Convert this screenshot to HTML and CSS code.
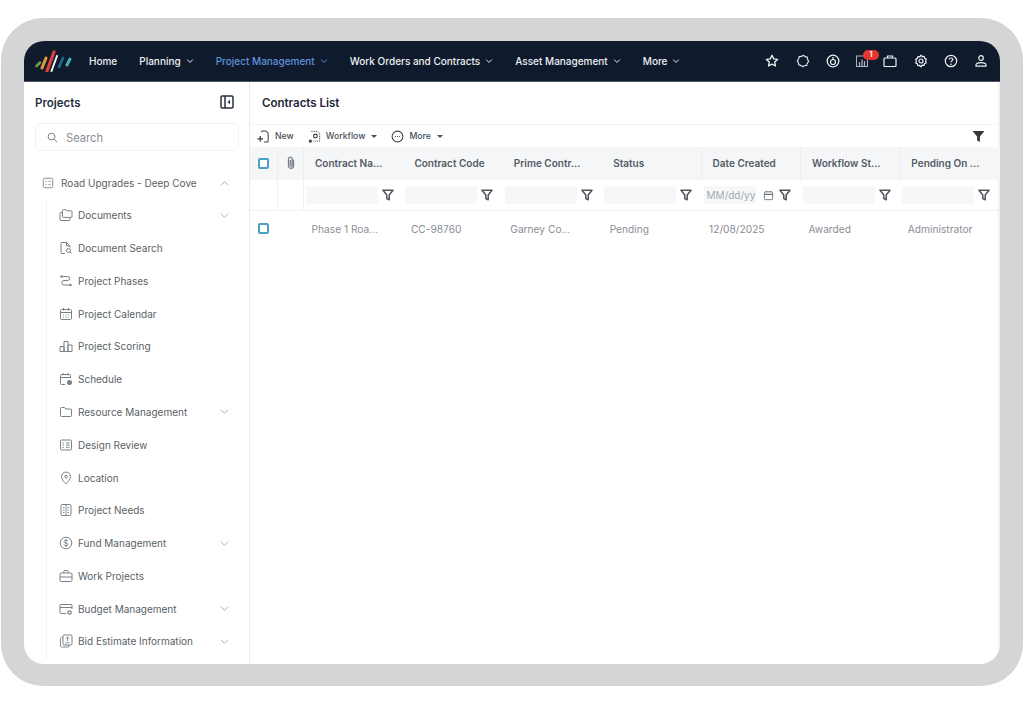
FILE: index.html
```html
<!DOCTYPE html>
<html lang="en">
<head>
    <meta charset="UTF-8">
    <meta name="viewport" content="width=device-width, initial-scale=1.0">
    <title>Contracts List</title>
    <link rel="stylesheet" href="styles.css">
</head>
<body>
    <!-- Icons -->
    <svg class="sprite" xmlns="http://www.w3.org/2000/svg">
        <symbol id="i-chev" viewBox="0 0 10 10"><path d="M1.500 3.200 5 6.800l3.500-3.600" fill="none" stroke="currentColor" stroke-width="1.200"/></symbol>
        <symbol id="i-up" viewBox="0 0 10 10"><path d="M1 7 5 3l4 4" fill="none" stroke="currentColor"/></symbol>
        <symbol id="i-down" viewBox="0 0 10 10"><path d="M1 3l4 4 4-4" fill="none" stroke="currentColor"/></symbol>
        <symbol id="i-filter" viewBox="0 0 12 12"><path d="M1 1.200h10L7.200 6v4.800L4.800 9.600V6z" fill="none" stroke="currentColor" stroke-width="1.500" stroke-linejoin="round"/></symbol>
        <symbol id="i-list" viewBox="0 0 14 14"><rect x="1.500" y="1.500" width="11" height="11" rx="1.500" fill="none" stroke="currentColor"/><path d="M4 5h1.500M7.500 5H10M4 9h1.500M7.500 9H10" stroke="currentColor"/></symbol>
        <symbol id="i-folder" viewBox="0 0 14 14"><path d="M1.500 3.500a1 1 0 0 1 1-1h3l1.300 1.500h4.700a1 1 0 0 1 1 1v5.500a1 1 0 0 1-1 1h-9a1 1 0 0 1-1-1z" fill="none" stroke="currentColor"/></symbol>
        <symbol id="i-folders" viewBox="0 0 14 14"><path d="M3.500 3v-.5a.8.8 0 0 1 .8-.8h2.500l1 1.100h4.400a.8.8 0 0 1 .8.8v5a.8.8 0 0 1-.8.8H4.300a.8.8 0 0 1-.8-.8z" fill="none" stroke="currentColor"/><path d="M3.500 4.500h-1.500a1 1 0 0 0-1 1v6a1 1 0 0 0 1 1h8a1 1 0 0 0 1-1v-1.500" fill="none" stroke="currentColor"/></symbol>
        <symbol id="i-docsearch" viewBox="0 0 14 14"><path d="M6 12.500H3a1 1 0 0 1-1-1v-9a1 1 0 0 1 1-1h4.500L11 5v1.500M7.500 1.500V5H11" fill="none" stroke="currentColor"/><circle cx="9.500" cy="9.500" r="2" fill="none" stroke="currentColor"/><path d="m11 11 1.500 1.500" stroke="currentColor"/></symbol>
        <symbol id="i-route" viewBox="0 0 14 14"><circle cx="2.500" cy="2.500" r="1.200" fill="currentColor"/><circle cx="11.500" cy="11" r="1.200" fill="currentColor"/><path d="M3.500 2.500h5.200a2 2 0 0 1 0 4H5a2.200 2.200 0 0 0 0 4.500h5.500" fill="none" stroke="currentColor"/></symbol>
        <symbol id="i-cal" viewBox="0 0 14 14"><rect x="1.500" y="2.500" width="11" height="10" rx="1.200" fill="none" stroke="currentColor"/><path d="M1.500 5.500h11M4.500 1v2.500M9.500 1v2.500" stroke="currentColor"/><path d="M4 8h1M6.500 8h1M9 8h1M4 10.300h1M6.500 10.300h1M9 10.300h1" stroke="currentColor" stroke-width=".8"/></symbol>
        <symbol id="i-bars" viewBox="0 0 14 14"><path d="M1 12.500V7.500h4v5zM5 12.500V2.500h4v10zM9 12.500V6h4v6.500z" fill="none" stroke="currentColor" stroke-linejoin="round"/></symbol>
        <symbol id="i-sched" viewBox="0 0 14 14"><path d="M6 12.500H2.500a1 1 0 0 1-1-1v-8a1 1 0 0 1 1-1h8a1 1 0 0 1 1 1V6M1.500 5.500h10M4 1v2.500M9 1v2.500" fill="none" stroke="currentColor"/><circle cx="10.500" cy="10.500" r="2.500" fill="currentColor"/></symbol>
        <symbol id="i-review" viewBox="0 0 14 14"><rect x="1.500" y="2" width="11" height="10" rx="1.200" fill="none" stroke="currentColor"/><path d="M3.500 5h1.500M7 5h3.500M3.500 7h1.500M7 7h3.500M3.500 9.300h1.500M7 9.300h3.500" stroke="currentColor" stroke-width=".9"/></symbol>
        <symbol id="i-pin" viewBox="0 0 14 14"><path d="M7 13S2.500 8.800 2.500 5.600a4.500 4.500 0 0 1 9 0C11.500 8.800 7 13 7 13z" fill="none" stroke="currentColor"/><circle cx="7" cy="5.600" r="1.300" fill="none" stroke="currentColor"/></symbol>
        <symbol id="i-needs" viewBox="0 0 14 14"><rect x="2" y="1.500" width="10" height="11" rx="1.200" fill="none" stroke="currentColor"/><path d="M7 1.500v11M4 4.500h1.500M4 7h1.500M4 9.500h1.500M8.500 4.500H10M8.500 7H10M8.500 9.500H10" stroke="currentColor" stroke-width=".9"/></symbol>
        <symbol id="i-fund" viewBox="0 0 14 14"><circle cx="7" cy="7" r="5.800" fill="none" stroke="currentColor"/><path d="M9 5.200C8.700 4.400 7.900 4 7 4c-1.200 0-2 .6-2 1.500C5 7.600 9.100 6.400 9.100 8.500 9.100 9.400 8.200 10 7 10c-1 0-1.800-.4-2.100-1.300M7 3v8" fill="none" stroke="currentColor" stroke-width=".9"/></symbol>
        <symbol id="i-case" viewBox="0 0 14 14"><rect x="1" y="4" width="12" height="8.500" rx="1.300" fill="none" stroke="currentColor"/><path d="M4.800 4V2.500a1 1 0 0 1 1-1h2.400a1 1 0 0 1 1 1V4M1 8h12" fill="none" stroke="currentColor"/></symbol>
        <symbol id="i-budget" viewBox="0 0 14 14"><path d="M7 11.500H2a1 1 0 0 1-1-1v-7a1 1 0 0 1 1-1h10a1 1 0 0 1 1 1V7M1 5.500h12" fill="none" stroke="currentColor"/><circle cx="10.500" cy="10.500" r="1.700" fill="none" stroke="currentColor" stroke-width="1.200"/></symbol>
        <symbol id="i-bid" viewBox="0 0 14 14"><rect x="4" y="1" width="9" height="10" rx="1.200" fill="none" stroke="currentColor"/><path d="M4 3.500H2.500a1 1 0 0 0-1 1V12a1 1 0 0 0 1 1H9a1 1 0 0 0 1-1v-1M8.500 3v4M7 4.500 8.500 3 10 4.500M6.500 8.800h4" fill="none" stroke="currentColor" stroke-width=".9"/></symbol>
        <symbol id="i-cal-sm" viewBox="0 0 12 12"><rect x="1.500" y="2" width="9" height="8.500" rx="1" fill="none" stroke="currentColor"/><path d="M1.500 4.800h9" stroke="currentColor" stroke-width="1.300"/><path d="M3.800 1v1.500M8.200 1v1.500" stroke="currentColor"/></symbol>
    </svg>

    <div class="frame">
        <div class="window">
            <!-- Верхнее меню -->
            <header class="topbar">
                <svg class="logo" viewBox="0 0 38 22">
                    <path d="M1.500 16 5 12.500" stroke="#6f9c4a" stroke-width="2.600" stroke-linecap="round"/>
                    <path d="M7 18 11 8" stroke="#e09a35" stroke-width="3" stroke-linecap="round"/>
                    <path d="M12 21 19 2" stroke="#d8433c" stroke-width="3.200" stroke-linecap="round"/>
                    <path d="M16.500 21 22 6" stroke="#eef0f2" stroke-width="2" stroke-linecap="round"/>
                    <path d="M24 17 28 8" stroke="#1f6f8b" stroke-width="2.600" stroke-linecap="round"/>
                    <path d="M32 15 35 9" stroke="#3fb4b8" stroke-width="3" stroke-linecap="round"/>
                </svg>
                <nav class="nav">
                    <a class="nav-item">Home</a>
                    <a class="nav-item">Planning <svg class="chev"><use href="#i-chev"/></svg></a>
                    <a class="nav-item active">Project Management <svg class="chev"><use href="#i-chev"/></svg></a>
                    <a class="nav-item">Work Orders and Contracts <svg class="chev"><use href="#i-chev"/></svg></a>
                    <a class="nav-item">Asset Management <svg class="chev"><use href="#i-chev"/></svg></a>
                    <a class="nav-item">More <svg class="chev"><use href="#i-chev"/></svg></a>
                </nav>
                <div class="top-icons">
                    <svg class="top-icon star" viewBox="0 0 14 14"><path d="m7 1.300 1.700 3.600 3.900.5-2.900 2.700.8 3.900L7 10.100l-3.500 1.900.8-3.900L1.400 5.400l3.900-.5z" fill="none" stroke="currentColor" stroke-width="1.300" stroke-linejoin="round"/></svg>
                    <svg class="top-icon" viewBox="0 0 14 14"><path d="M12.800 7 10.940 10.080M11.100 11.100 7.610 11.960M7 12.800 3.920 10.940M2.900 11.100 2.040 7.610M1.200 7 3.060 3.920M2.900 2.900 6.390 2.040M7 1.200 10.080 3.060M11.100 2.900 11.960 6.390" fill="none" stroke="currentColor" stroke-width="1.100" stroke-linecap="round"/></svg>
                    <svg class="top-icon" viewBox="0 0 14 14"><circle cx="7" cy="7" r="5.800" fill="none" stroke="currentColor" stroke-width="1.300"/><circle cx="7" cy="8" r="2.500" fill="none" stroke="currentColor" stroke-width="1.200"/><path d="M7 3v3" stroke="currentColor" stroke-width="1.200"/></svg>
                    <span class="report">
                        <svg class="top-icon" viewBox="0 0 14 14"><rect x="1.500" y="2" width="11" height="10.500" fill="none" stroke="currentColor"/><path d="M4.500 12V8M7 12V5.500M9.500 12V7" stroke="currentColor" stroke-width="1.300"/></svg>
                        <span class="badge">1</span>
                    </span>
                    <svg class="top-icon case" viewBox="0 0 14 14"><rect x="1" y="4" width="12" height="8.500" rx="1" fill="none" stroke="currentColor" stroke-width="1.200"/><path d="M4.500 4V2h5v2" fill="none" stroke="currentColor" stroke-width="1.200"/></svg>
                    <svg class="top-icon" viewBox="0 0 14 14"><path d="M7 1.200 8.200 2.600l1.900-.2.500 1.800 1.700.9-.7 1.800.7 1.800-1.700.9-.5 1.800-1.900-.2L7 12.800l-1.200-1.400-1.900.2-.5-1.800-1.700-.9.700-1.800-.7-1.800 1.700-.9.500-1.800 1.900.2z" fill="none" stroke="currentColor" stroke-width="1.200" stroke-linejoin="round"/><circle cx="7" cy="7" r="2" fill="none" stroke="currentColor" stroke-width="1.200"/></svg>
                    <svg class="top-icon" viewBox="0 0 14 14"><circle cx="7" cy="7" r="5.700" fill="none" stroke="currentColor" stroke-width="1.200"/><path d="M5.200 5.500C5.300 4.500 6 4 7 4s1.800.6 1.800 1.500C8.800 6.800 7 6.800 7 8.300" fill="none" stroke="currentColor" stroke-width="1.200"/><circle cx="7" cy="10.200" r=".8" fill="currentColor"/></svg>
                    <svg class="top-icon" viewBox="0 0 14 14"><circle cx="7" cy="4" r="2.300" fill="none" stroke="currentColor" stroke-width="1.200"/><path d="M2 12.200V11c0-1.500 1.500-2.300 5-2.300s5 .8 5 2.300v1.200z" fill="none" stroke="currentColor" stroke-width="1.200" stroke-linejoin="round"/></svg>
                </div>
            </header>

            <div class="body">
                <!-- Боковая панель -->
                <aside class="sidebar">
                    <div class="side-head">
                        <h2 class="side-title">Projects</h2>
                        <svg class="collapse" viewBox="0 0 14 14"><rect x="1" y="1" width="12" height="12" rx="1.200" fill="none" stroke="currentColor" stroke-width="1.500"/><path d="M5 1v12" stroke="currentColor" stroke-width="1.500"/><path d="M10 4.800v4.400L7.500 7z" fill="currentColor"/></svg>
                    </div>
                    <div class="search">
                        <svg class="search-icon" viewBox="0 0 12 12"><circle cx="5" cy="5" r="3.700" fill="none" stroke="currentColor"/><path d="m8 8 3 3" stroke="currentColor"/></svg>
                        <span>Search</span>
                    </div>
                    <div class="project">
                        <svg class="project-icon"><use href="#i-list"/></svg>
                        <span class="item-text">Road Upgrades - Deep Cove</span>
                        <svg class="arrow"><use href="#i-up"/></svg>
                    </div>
                    <ul class="tree">
                        <li class="tree-item"><svg class="item-icon"><use href="#i-folders"/></svg><span class="item-text">Documents</span><svg class="arrow"><use href="#i-down"/></svg></li>
                        <li class="tree-item"><svg class="item-icon"><use href="#i-docsearch"/></svg><span class="item-text">Document Search</span></li>
                        <li class="tree-item"><svg class="item-icon"><use href="#i-route"/></svg><span class="item-text">Project Phases</span></li>
                        <li class="tree-item"><svg class="item-icon"><use href="#i-cal"/></svg><span class="item-text">Project Calendar</span></li>
                        <li class="tree-item"><svg class="item-icon"><use href="#i-bars"/></svg><span class="item-text">Project Scoring</span></li>
                        <li class="tree-item"><svg class="item-icon"><use href="#i-sched"/></svg><span class="item-text">Schedule</span></li>
                        <li class="tree-item"><svg class="item-icon"><use href="#i-folder"/></svg><span class="item-text">Resource Management</span><svg class="arrow"><use href="#i-down"/></svg></li>
                        <li class="tree-item"><svg class="item-icon"><use href="#i-review"/></svg><span class="item-text">Design Review</span></li>
                        <li class="tree-item"><svg class="item-icon"><use href="#i-pin"/></svg><span class="item-text">Location</span></li>
                        <li class="tree-item"><svg class="item-icon"><use href="#i-needs"/></svg><span class="item-text">Project Needs</span></li>
                        <li class="tree-item"><svg class="item-icon"><use href="#i-fund"/></svg><span class="item-text">Fund Management</span><svg class="arrow"><use href="#i-down"/></svg></li>
                        <li class="tree-item"><svg class="item-icon"><use href="#i-case"/></svg><span class="item-text">Work Projects</span></li>
                        <li class="tree-item"><svg class="item-icon"><use href="#i-budget"/></svg><span class="item-text">Budget Management</span><svg class="arrow"><use href="#i-down"/></svg></li>
                        <li class="tree-item"><svg class="item-icon"><use href="#i-bid"/></svg><span class="item-text">Bid Estimate Information</span><svg class="arrow"><use href="#i-down"/></svg></li>
                    </ul>
                </aside>

                <!-- Основная часть -->
                <main class="main">
                    <h1 class="page-title">Contracts List</h1>
                    <div class="toolbar">
                        <span class="tool">
                            <svg class="tool-icon" viewBox="0 0 14 14"><path d="M5 2.500V2a1 1 0 0 1 1-1h3.500L12 3.500V12a1 1 0 0 1-1 1H7.500" fill="none" stroke="currentColor" stroke-width="1.100"/><path d="M3.500 6.500v6M.5 9.500h6" stroke="currentColor" stroke-width="1.400"/></svg>
                            New
                        </span>
                        <span class="tool">
                            <svg class="tool-icon" viewBox="0 0 14 14"><path d="M3.500 1.500h7l2 2v8.500h-7" fill="none" stroke="currentColor" stroke-width=".9" stroke-dasharray="1.500 1"/><circle cx="8" cy="6.500" r="2" fill="none" stroke="currentColor" stroke-width="1.300"/><rect x="1" y="10.500" width="3" height="3" fill="currentColor"/></svg>
                            Workflow <span class="caret"></span>
                        </span>
                        <span class="tool">
                            <svg class="tool-icon" viewBox="0 0 14 14"><circle cx="7" cy="7" r="5.800" fill="none" stroke="currentColor" stroke-width="1.100"/><path d="M4.200 7h1M6.500 7h1M8.800 7h1" stroke="currentColor" stroke-width="1.200"/></svg>
                            More <span class="caret"></span>
                        </span>
                        <svg class="clear-filter" viewBox="0 0 12 12"><path d="M.5 1h11L7.300 6v5L4.700 9.700V6z" fill="currentColor"/></svg>
                    </div>

                    <div class="grid">
                        <div class="head-cell small"><span class="check"></span></div>
                        <div class="head-cell small clip-cell"><svg class="clip" viewBox="0 0 10 14"><path d="M7.500 3.500v6.300a2.500 2.500 0 0 1-5 0V3a1.800 1.800 0 0 1 3.600 0v6.300a.9.900 0 0 1-1.800 0V4" fill="none" stroke="currentColor" stroke-width="1.300"/></svg></div>
                        <div class="head-cell">Contract Na...</div>
                        <div class="head-cell">Contract Code</div>
                        <div class="head-cell">Prime Contr...</div>
                        <div class="head-cell">Status</div>
                        <div class="head-cell">Date Created</div>
                        <div class="head-cell">Workflow St...</div>
                        <div class="head-cell">Pending On ...</div>

                        <div class="filter-cell empty"></div>
                        <div class="filter-cell empty"></div>
                        <div class="filter-cell"><span class="filter-input"></span><svg class="filter-icon"><use href="#i-filter"/></svg></div>
                        <div class="filter-cell"><span class="filter-input"></span><svg class="filter-icon"><use href="#i-filter"/></svg></div>
                        <div class="filter-cell"><span class="filter-input"></span><svg class="filter-icon"><use href="#i-filter"/></svg></div>
                        <div class="filter-cell"><span class="filter-input"></span><svg class="filter-icon"><use href="#i-filter"/></svg></div>
                        <div class="filter-cell"><span class="filter-input date">MM/dd/yy</span><svg class="cal-icon"><use href="#i-cal-sm"/></svg><svg class="filter-icon"><use href="#i-filter"/></svg></div>
                        <div class="filter-cell"><span class="filter-input"></span><svg class="filter-icon"><use href="#i-filter"/></svg></div>
                        <div class="filter-cell"><span class="filter-input"></span><svg class="filter-icon"><use href="#i-filter"/></svg></div>

                        <div class="data-cell small"><span class="check"></span></div>
                        <div class="data-cell small"></div>
                        <div class="data-cell">Phase 1 Roa...</div>
                        <div class="data-cell">CC-98760</div>
                        <div class="data-cell">Garney Co...</div>
                        <div class="data-cell">Pending</div>
                        <div class="data-cell">12/08/2025</div>
                        <div class="data-cell">Awarded</div>
                        <div class="data-cell">Administrator</div>
                    </div>
                </main>
            </div>
        </div>
    </div>
</body>
</html>
```

FILE: styles.css
```css
/* Общие стили */
* {
    box-sizing: border-box;
}

body {
    margin: 0;
    height: 705px;
    background-color: #ffffff;
    font-family: 'Inter', 'Liberation Sans', sans-serif;
    overflow: hidden;
}

.sprite {
    display: none;
}

.frame {
    width: 1022px;
    height: 668px;
    margin: 18px 0 0 1px;
    padding: 23px 23px 22px;
    background-color: #d5d5d5;
    border-radius: 42px;
}

.window {
    height: 100%;
    display: flex;
    flex-direction: column;
    background-color: #ffffff;
    border-radius: 20px;
    overflow: hidden;
}

/* Верхнее меню */
.topbar {
    height: 41px;
    flex: none;
    display: flex;
    align-items: center;
    background-color: #0f1a2c;
    border-bottom: 1px solid #4a5564;
    color: #eef0f3;
}

.logo {
    width: 38px;
    height: 22px;
    margin-left: 11px;
    flex: none;
}

.nav {
    display: flex;
    align-items: center;
    margin-left: 16px;
    gap: 22px;
}

.nav-item {
    display: flex;
    align-items: center;
    gap: 5px;
    font-size: 10px;
    font-weight: 500;
    white-space: nowrap;
}

.nav-item.active {
    color: #5f93dc;
}

.chev {
    width: 8px;
    height: 8px;
}

.top-icons {
    display: flex;
    align-items: center;
    gap: 16px;
    margin-left: auto;
    margin-right: 12px;
}

.top-icon {
    display: block;
    width: 14px;
    height: 14px;
}

.top-icon.star {
    margin-right: 1px;
}

.top-icon.case {
    margin-right: 1px;
}

.report {
    position: relative;
    display: block;
    margin-left: -1px;
    margin-right: -2px;
}

.report .top-icon {
    color: #aab1bb;
}

.badge {
    position: absolute;
    top: -4px;
    left: 8px;
    width: 16px;
    height: 10px;
    border-radius: 5px;
    background-color: #e5352f;
    color: #ffffff;
    font-size: 7px;
    font-weight: 700;
    line-height: 10px;
    text-align: center;
}

.body {
    flex: 1;
    min-height: 0;
    display: flex;
}

/* Боковая панель */
.sidebar {
    width: 226px;
    flex: none;
    padding: 0 11px;
    border-right: 1px solid #e9ebee;
    overflow: hidden;
}

.side-head {
    display: flex;
    align-items: center;
    justify-content: space-between;
    height: 41px;
    padding-top: 1px;
    padding-right: 4px;
}

.side-title {
    margin: 0;
    font-size: 11.500px;
    font-weight: 600;
    color: #27303d;
}

.collapse {
    width: 14px;
    height: 14px;
    margin-top: -3px;
    color: #27303d;
}

.search {
    display: flex;
    align-items: center;
    gap: 8px;
    width: 204px;
    height: 28px;
    padding-top: 1px;
    padding-left: 11px;
    border: 1px solid #f1f2f4;
    border-radius: 6px;
    font-size: 11.200px;
    color: #8b9097;
}

.search-icon {
    width: 11px;
    height: 11px;
    color: #6f757d;
}

.project {
    display: flex;
    align-items: center;
    height: 32px;
    margin-top: 16px;
    padding-left: 7px;
}

.project-icon {
    width: 12px;
    height: 12px;
    margin-right: 7px;
    color: #7a7f86;
}

.item-text {
    font-size: 10px;
    color: #5a5f66;
    white-space: nowrap;
}

.arrow {
    width: 9px;
    height: 9px;
    margin-left: auto;
    margin-right: 9px;
    color: #a0a4a9;
}

.tree {
    list-style: none;
    margin: 0 0 0 11px;
    padding: 0 0 0 12px;
    border-left: 1px solid #f1f2f4;
}

.tree-item {
    display: flex;
    align-items: center;
    height: 32.780px;
}

.item-icon {
    width: 14px;
    height: 14px;
    margin-right: 5px;
    flex: none;
    color: #7a7f86;
}

/* Основная часть */
.main {
    flex: 1;
    min-width: 0;
    padding-right: 3px;
    box-shadow: inset -3px 0 2px -1px #f0f1f3;
}

.page-title {
    margin: 0;
    height: 42px;
    padding-left: 12px;
    font-size: 11.500px;
    font-weight: 600;
    line-height: 43px;
    color: #1d2735;
}

.toolbar {
    display: flex;
    align-items: center;
    gap: 14px;
    height: 23px;
    padding-left: 7px;
    padding-right: 12px;
    border-top: 1px solid #f3f4f5;
}

.tool {
    display: flex;
    align-items: center;
    gap: 5px;
    font-size: 8.700px;
    font-weight: 500;
    color: #4a4f57;
}

.tool-icon {
    width: 13px;
    height: 13px;
    color: #3a3f47;
}

.caret {
    width: 0;
    height: 0;
    margin-left: 1px;
    border-left: 3px solid transparent;
    border-right: 3px solid transparent;
    border-top: 3px solid #4a4f57;
}

.clear-filter {
    width: 13px;
    height: 13px;
    margin-left: auto;
    color: #33383f;
}

/* Таблица */
.grid {
    display: grid;
    grid-template-columns: 28px 26px repeat(7, 99.400px);
    grid-template-rows: 33px 31px 35px;
}

.head-cell {
    display: flex;
    align-items: center;
    padding-left: 11px;
    padding-bottom: 1px;
    background-color: #f4f6f8;
    font-size: 10px;
    font-weight: 600;
    color: #555b64;
    white-space: nowrap;
}

.head-cell.small {
    padding-left: 8px;
    border-right: 1px solid #eceef0;
}

.head-cell.clip-cell {
    justify-content: center;
    padding-left: 0;
}

.head-cell:nth-child(6),
.head-cell:nth-child(7),
.head-cell:nth-child(8) {
    border-right: 1px solid #eceef0;
}

.check {
    display: block;
    width: 11px;
    height: 11px;
    border: 2px solid #4a9fc4;
    border-radius: 2px;
    background-color: #ffffff;
}

.clip {
    width: 10px;
    height: 14px;
    color: #7b8088;
}

.filter-cell {
    display: flex;
    align-items: center;
    padding-left: 2px;
    border-bottom: 1px solid #eef0f2;
}

.filter-cell.empty {
    border-right: 1px solid #eef0f2;
}

.filter-input {
    width: 72px;
    height: 18px;
    background-color: #f6f7f9;
    border-radius: 2px;
}

.filter-input.date {
    width: 52px;
    padding-left: 3px;
    font-size: 10px;
    line-height: 18px;
    color: #a4a8ae;
    white-space: nowrap;
    overflow: hidden;
}

.filter-icon {
    width: 12px;
    height: 12px;
    margin-left: 4px;
    color: #4f555e;
}

.cal-icon {
    width: 11px;
    height: 11px;
    margin-left: 7px;
    margin-right: 1px;
    color: #6b7078;
}

.data-cell {
    display: flex;
    align-items: center;
    padding-left: 7.500px;
    font-size: 10.200px;
    color: #8a8e95;
    white-space: nowrap;
}

.data-cell.small {
    padding-left: 8px;
}
```
